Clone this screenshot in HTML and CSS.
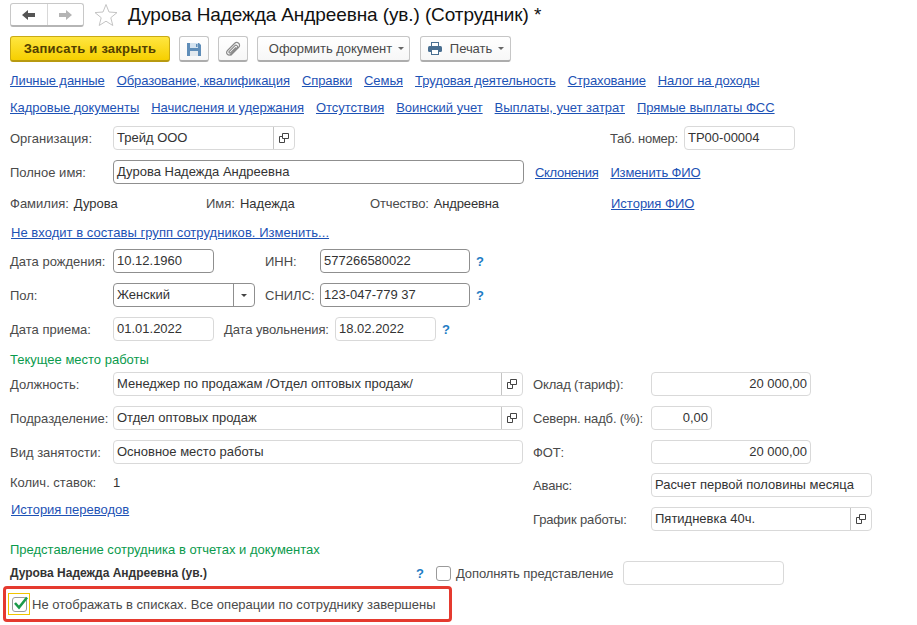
FILE: index.html
```html
<!DOCTYPE html>
<html lang="ru">
<head>
<meta charset="utf-8">
<title>Дурова Надежда Андреевна</title>
<link rel="stylesheet" href="styles.css">
</head>
<body>
<div class="page">
  <header class="titlebar">
    <div class="nav">
      <span class="nav-btn"><svg width="16" height="12" viewBox="0 0 16 12"><path d="M1 6 L7 1 V4 H14 V8 H7 V11 Z" fill="#555"/></svg></span>
      <span class="nav-btn nav-next"><svg width="16" height="12" viewBox="0 0 16 12"><path d="M15 6 L9 1 V4 H2 V8 H9 V11 Z" fill="#b4b4b4"/></svg></span>
    </div>
    <svg class="star" width="24" height="24" viewBox="0 0 24 24"><path d="M12 1.5 L15 9 L23 9.6 L16.8 14.7 L18.8 22.5 L12 18.2 L5.2 22.5 L7.2 14.7 L1 9.6 L9 9 Z" fill="#fff" stroke="#c4c4c4"/></svg>
    <h1 class="title">Дурова Надежда Андреевна (ув.) (Сотрудник) *</h1>
  </header>

  <div class="toolbar">
    <button class="btn btn-primary">Записать и закрыть</button>
    <button class="btn btn-icon"><svg width="14" height="14" viewBox="0 0 14 14"><path d="M0 1 H12 L14 3 V14 H0 Z" fill="#5f8db8"/><rect x="3" y="1" width="8" height="5" fill="#d5e3ef"/><rect x="9" y="2" width="1.5" height="3" fill="#5f8db8"/><rect x="3" y="9" width="8" height="5" fill="#e3e9ee"/></svg></button>
    <button class="btn btn-icon"><svg width="16" height="16" viewBox="0 0 16 16" fill="none" stroke="#8a8a8a" stroke-width="1.2"><path d="M5.5 14.5 L13.5 6.5 C15 5 14.8 3.2 13.6 2.2 C12.4 1.2 10.8 1.2 9.5 2.5 L2.5 9.5 C1.2 10.8 1.4 12.4 2.4 13.3 C3.4 14.2 5 14.2 6.2 13 L12 7 C12.8 6.2 12.7 5.2 12 4.6 C11.3 4 10.4 4.1 9.7 4.8 L4.3 10.3 C3.8 10.8 3.9 11.4 4.3 11.8 C4.7 12.1 5.3 12.1 5.7 11.7 L11 6.3"/></svg></button>
    <button class="btn btn-doc">Оформить документ<span class="caret"></span></button>
    <button class="btn btn-print"><svg class="print-icon" width="14" height="13" viewBox="0 0 14 13"><rect x="3.5" y=".5" width="7" height="4" fill="#fff" stroke="#4a6f91"/><rect x="0" y="4" width="14" height="6" rx="1.5" fill="#4a6f91"/><rect x="3.5" y="7.5" width="7" height="5" fill="#fff" stroke="#4a6f91"/></svg>Печать<span class="caret"></span></button>
  </div>

  <nav class="links links-first">
    <a>Личные данные</a><a>Образование, квалификация</a><a>Справки</a><a>Семья</a><a>Трудовая деятельность</a><a>Страхование</a><a>Налог на доходы</a>
  </nav>
  <nav class="links links-second">
    <a>Кадровые документы</a><a>Начисления и удержания</a><a>Отсутствия</a><a>Воинский учет</a><a>Выплаты, учет затрат</a><a>Прямые выплаты ФСС</a>
  </nav>

  <div class="row row-org">
    <span class="label">Организация:</span>
    <div class="field w-182"><span class="value">Трейд ООО</span><span class="open"><svg width="10" height="10" viewBox="0 0 10 10" fill="none" stroke="#444"><path d="M3.5 .5 H9.5 V5.5 H3.5 Z M3.5 3.5 H.5 V9.5 H5.5 V5.5"/></svg></span></div>
    <span class="label tab-label">Таб. номер:</span>
    <div class="field w-111"><span class="value">ТР00-00004</span></div>
  </div>

  <div class="row">
    <span class="label">Полное имя:</span>
    <div class="field dark w-411"><span class="value">Дурова Надежда Андреевна</span></div>
    <a class="link name-link">Склонения</a>
    <a class="link change-link">Изменить ФИО</a>
  </div>

  <div class="row name-parts">
    <span class="part part-surname"><span class="label-inline">Фамилия:</span>Дурова</span>
    <span class="part part-name"><span class="label-inline">Имя:</span>Надежда</span>
    <span class="part part-patronymic"><span class="label-inline">Отчество:</span>Андреевна</span>
    <a class="link">История ФИО</a>
  </div>

  <a class="link groups">Не входит в составы групп сотрудников. Изменить...</a>

  <div class="row row-birth">
    <span class="label">Дата рождения:</span>
    <div class="field dark w-101"><span class="value">10.12.1960</span></div>
    <span class="label inn-label">ИНН:</span>
    <div class="field dark w-150"><span class="value">577266580022</span></div>
    <span class="help">?</span>
  </div>

  <div class="row">
    <span class="label">Пол:</span>
    <div class="field dark w-142"><span class="value">Женский</span><span class="open dark-sep"><span class="caret caret-dark"></span></span></div>
    <span class="label snils-label">СНИЛС:</span>
    <div class="field dark w-150"><span class="value">123-047-779 37</span></div>
    <span class="help">?</span>
  </div>

  <div class="row">
    <span class="label">Дата приема:</span>
    <div class="field w-101"><span class="value">01.01.2022</span></div>
    <span class="label fire-label">Дата увольнения:</span>
    <div class="field w-101"><span class="value">18.02.2022</span></div>
    <span class="help">?</span>
  </div>

  <h2 class="section section-work">Текущее место работы</h2>

  <div class="columns">
    <div class="col-left">
      <div class="row row-first">
        <span class="label">Должность:</span>
        <div class="field w-410"><span class="value">Менеджер по продажам /Отдел оптовых продаж/</span><span class="open"><svg width="10" height="10" viewBox="0 0 10 10" fill="none" stroke="#444"><path d="M3.5 .5 H9.5 V5.5 H3.5 Z M3.5 3.5 H.5 V9.5 H5.5 V5.5"/></svg></span></div>
      </div>
      <div class="row">
        <span class="label">Подразделение:</span>
        <div class="field w-410"><span class="value">Отдел оптовых продаж</span><span class="open"><svg width="10" height="10" viewBox="0 0 10 10" fill="none" stroke="#444"><path d="M3.5 .5 H9.5 V5.5 H3.5 Z M3.5 3.5 H.5 V9.5 H5.5 V5.5"/></svg></span></div>
      </div>
      <div class="row">
        <span class="label">Вид занятости:</span>
        <div class="field w-410"><span class="value">Основное место работы</span></div>
      </div>
      <div class="row row-rate">
        <span class="label">Колич. ставок:</span><span class="rate">1</span>
      </div>
      <a class="link history">История переводов</a>
    </div>
    <div class="col-right">
      <div class="row row-first">
        <span class="label label-right">Оклад (тариф):</span>
        <div class="field w-160"><span class="value num">20 000,00</span></div>
      </div>
      <div class="row">
        <span class="label label-right">Северн. надб. (%):</span>
        <div class="field w-61"><span class="value num">0,00</span></div>
      </div>
      <div class="row">
        <span class="label label-right">ФОТ:</span>
        <div class="field w-160"><span class="value num">20 000,00</span></div>
      </div>
      <div class="row row-tight">
        <span class="label label-right">Аванс:</span>
        <div class="field w-221"><span class="value">Расчет первой половины месяца</span></div>
      </div>
      <div class="row">
        <span class="label label-right">График работы:</span>
        <div class="field w-221"><span class="value">Пятидневка 40ч.</span><span class="open"><svg width="10" height="10" viewBox="0 0 10 10" fill="none" stroke="#444"><path d="M3.5 .5 H9.5 V5.5 H3.5 Z M3.5 3.5 H.5 V9.5 H5.5 V5.5"/></svg></span></div>
      </div>
    </div>
  </div>

  <h2 class="section section-view">Представление сотрудника в отчетах и документах</h2>

  <div class="row row-view">
    <b class="view-name">Дурова Надежда Андреевна (ув.)</b>
    <span class="help help-view">?</span>
    <span class="check"></span>
    <span class="check-label">Дополнять представление</span>
    <div class="field w-161 field-extra"></div>
  </div>

  <div class="row-hide">
    <span class="focus"><span class="check check-on"><svg width="16" height="14" viewBox="0 0 16 14"><path d="M2 7 L6 11.5 L14 1.5" fill="none" stroke="#1c9a4a" stroke-width="2.6"/></svg></span></span>
    <span class="hide-label">Не отображать в списках. Все операции по сотруднику завершены</span>
    <span class="red-box"></span>
  </div>
</div>
</body>
</html>
```
FILE: styles.css
```css
* { box-sizing: border-box; }
html, body { margin: 0; padding: 0; background: #fff; }
body { width: 917px; height: 625px; overflow: hidden; font: 13px "Liberation Sans", Arial, sans-serif; color: #4a4a4a; letter-spacing: 0; }
.page { padding-left: 10px; }

.titlebar { display: flex; align-items: center; height: 25px; padding-top: 1px; margin-top: 2px; }
.nav { display: flex; width: 74px; height: 24px; border: 1px solid #c8c8c8; border-bottom: 2px solid #b5b5b5; border-radius: 3px; }
.nav-btn { flex: 1; display: flex; align-items: center; justify-content: center; }
.nav-next { border-left: 1px solid #d8d8d8; }
.star { margin-left: 10px; }
.title { margin: 0 0 0 10px; font-size: 19px; font-weight: 400; color: #111; letter-spacing: -.1px; white-space: nowrap; }

.toolbar { display: flex; margin-top: 9px; height: 26px; }
.btn { height: 26px; padding: 0; font: inherit; letter-spacing: -.05px; color: #4a4a4a; background: linear-gradient(#fff, #f7f7f7); border: 1px solid #c6c6c6; border-bottom: 2px solid #adadad; border-radius: 3px; display: flex; align-items: center; justify-content: center; }
.btn-primary { width: 160px; color: #524000; font-weight: 700; letter-spacing: .2px; background: linear-gradient(#ffe640, #f6cf00); border-color: #c9aa14 #c9aa14 #b89a10; }
.btn-icon { width: 30px; margin-left: 9px; }
.btn-doc { width: 153px; margin-left: 9px; padding-left: 6px; }
.btn-print { width: 91px; margin-left: 10px; padding-left: 1px; }
.print-icon { margin-right: 8px; }
.caret { display: inline-block; width: 0; height: 0; margin-left: 6px; border: 3px solid transparent; border-top: 3px solid #666; border-bottom: 0; }
.caret-dark { margin: 0; border-top-color: #444; }

.links { display: flex; gap: 12px; height: 16px; line-height: 16px; }
.links-first { margin-top: 11px; letter-spacing: -.08px; }
.links-second { margin-top: 11px; letter-spacing: -.02px; }
.links a, .link { color: #1d52b5; text-decoration: underline; white-space: nowrap; }

.row { display: flex; align-items: center; height: 24px; margin-top: 10px; white-space: nowrap; }
.label { width: 103px; flex: none; }
.field { display: flex; align-items: stretch; height: 24px; flex: none; border: 1px solid #d9d9d9; border-radius: 4px; background: #fff; overflow: hidden; }
.field.dark { border-color: #8f8f8f; }
.value { flex: 1; padding: 0 3px; line-height: 22px; color: #333; }
.num { text-align: right; }
.open { width: 21px; flex: none; display: flex; align-items: center; justify-content: center; border-left: 1px solid #c4c4c4; }
.dark-sep { border-left-color: #8f8f8f; }
.w-61 { width: 61px; }
.w-101 { width: 101px; }
.w-111 { width: 111px; }
.w-142 { width: 142px; }
.w-150 { width: 150px; }
.w-160 { width: 160px; }
.w-161 { width: 161px; }
.w-182 { width: 182px; }
.w-221 { width: 221px; }
.w-410 { width: 410px; }
.w-411 { width: 411px; }

.tab-label { width: 74px; margin-left: 315px; letter-spacing: -.25px; }
.name-link { margin-left: 11px; letter-spacing: -.3px; }
.change-link { margin-left: 12px; letter-spacing: -.12px; }

.name-parts { margin-top: 7px; }
.part { display: flex; color: #333; }
.label-inline { color: #4a4a4a; margin-right: 5px; }
.part-surname { width: 196px; }
.label-inline-wide { margin-right: 6px; }
.part-name { width: 164px; }
.part-patronymic { width: 241px; letter-spacing: -.15px; }

.groups { display: block; margin-top: 10px; margin-left: 1px; height: 16px; line-height: 16px; letter-spacing: .04px; }

.row-birth { margin-top: 8px; }
.inn-label { width: 55px; margin-left: 51px; }
.snils-label { width: 55px; margin-left: 10px; }
.fire-label { width: 111px; margin-left: 10px; letter-spacing: -.1px; }
.help { margin-left: 6px; color: #1e7cc4; font-weight: 700; }

.section { margin: 0; font-size: 13px; font-weight: 400; color: #0a9a4c; height: 16px; line-height: 16px; }
.section-work { margin-top: 11px; }

.columns { display: flex; }
.col-left { width: 523px; }
.col-right { margin-left: 0; }
.row-first { margin-top: 4px; }
.row-rate { margin-top: 6px; }
.rate { color: #333; }
.history { display: block; margin-top: 8px; margin-left: 1px; height: 16px; line-height: 16px; }
.label-right { width: 118px; letter-spacing: -.15px; }
.row-tight { margin-top: 9px; }

.section-view { margin-top: 11px; }
.row-view { margin-top: 3px; }
.view-name { width: 406px; font-size: 12px; color: #333; letter-spacing: 0; }
.help-view { margin-left: 0; width: 20px; }
.check { display: inline-block; width: 15px; height: 15px; flex: none; border: 1px solid #9a9a9a; border-radius: 3px; background: #fff; position: relative; }
.check-label { margin-left: 5px; width: 167px; letter-spacing: -.1px; }
.field-extra { margin-left: 0; }

.row-hide { position: relative; display: flex; align-items: center; height: 22px; margin-top: 8px; margin-left: -2px; white-space: nowrap; }
.focus { width: 22px; height: 22px; border: 1px solid #f0c400; display: flex; align-items: center; justify-content: center; }
.check-on svg { position: absolute; left: 0; top: -2px; }
.hide-label { margin-left: 2px; }
.red-box { position: absolute; left: -5px; top: -7px; width: 449px; height: 36px; border: 3px solid #e53a2f; border-radius: 4px; }
```
